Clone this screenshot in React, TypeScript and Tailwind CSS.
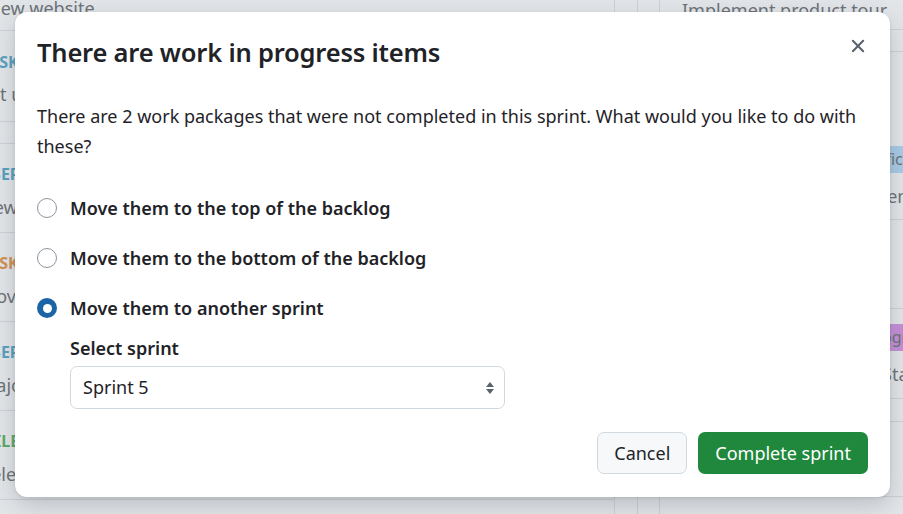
import React, { useState } from "react";

const LEFT_CARDS = [
  { type: "USER STORY", color: "text-[#5a9fbf]", subject: "New website login" },
  { type: "TASK", color: "text-[#d08f55]", subject: "Move assets" },
  { type: "USER STORY", color: "text-[#5a9fbf]", subject: "Major release prep" },
  { type: "MILESTONE", color: "text-[#5fa86a]", subject: "Release new version" },
];

const OPTIONS = [
  { id: "top", label: "Move them to the top of the backlog" },
  { id: "bottom", label: "Move them to the bottom of the backlog" },
  { id: "sprint", label: "Move them to another sprint" },
];

function Background() {
  return (
    <div className="flex h-[514px] overflow-hidden bg-[#e3e6e9] text-[18px] text-[#6c7278] whitespace-nowrap">
      {/* left column */}
      <div className="w-[655px] shrink-0 border-r border-[#cdd2d7] -ml-[40px]">
        <div className="h-[35px] border-b border-[#cdd2d7] pl-[27px] leading-[24px] -mt-[4px]">
          New website
        </div>
        <div className="h-[91px] border-b border-[#cdd2d7] pl-[20px] pt-[19px]">
          <div className="text-[16px] font-bold text-[#5a9fbf] leading-[24px]">TASK</div>
          <div className="leading-[24px] mt-[8px]">Set up hosting</div>
        </div>
        <div className="h-[22px] border-b border-[#cdd2d7]" />
        {LEFT_CARDS.map((c, i) => (
          <div key={i} className="h-[89px] border-b border-[#cdd2d7] pl-[20px] pt-[18px]">
            <div className={`text-[16px] font-bold leading-[24px] ${c.color}`}>{c.type}</div>
            <div className="leading-[24px] mt-[9px]">{c.subject}</div>
          </div>
        ))}
      </div>
      <div className="w-[23px] shrink-0 border-r border-[#cdd2d7]" />
      <div className="w-[22px] shrink-0 border-r border-[#cdd2d7]" />
      {/* right column */}
      <div className="flex-1 min-w-0">
        <div className="h-[38px] border-b border-[#cdd2d7] pl-[22px] -mt-[8px] flex items-center">
          Implement product tour
        </div>
        <div className="h-[22px] border-b border-[#cdd2d7]" />
        <div className="h-[168px] border-b border-[#cdd2d7] pt-[93px]">
          <div className="pl-[180px]">
            <span className="bg-[#a9cbe6] text-[16px] px-[6px] leading-[27px] inline-block">Specification</span>
          </div>
          <div className="leading-[24px] mt-[11px] pl-[206px]">Theme</div>
        </div>
        <div className="h-[89px] border-b border-[#cdd2d7]" />
        <div className="h-[90px] border-b border-[#cdd2d7] pt-[14px]">
          <div className="pl-[200px]">
            <span className="bg-[#c58fd8] text-[16px] px-[6px] leading-[27px] inline-block">Progress</span>
          </div>
          <div className="leading-[24px] mt-[11px] pl-[222px]">Status</div>
        </div>
        <div className="h-[23px] border-b border-[#cdd2d7]" />
        <div className="h-[75px] border-b border-[#cdd2d7]" />
      </div>
    </div>
  );
}

function Radio({ checked }: { checked: boolean }) {
  return checked ? (
    <span className="w-[20px] h-[20px] rounded-full bg-[#1b65a6] flex items-center justify-center shrink-0">
      <span className="w-[9px] h-[9px] rounded-full bg-white" />
    </span>
  ) : (
    <span className="w-[20px] h-[20px] rounded-full border border-[#8c959f] bg-white shrink-0" />
  );
}

export default function App() {
  const [choice, setChoice] = useState("sprint");

  return (
    <div
      className="relative w-[903px] h-[514px] overflow-hidden"
      style={{ fontFamily: '"Noto Sans", "Open Sans", sans-serif' }}
    >
      <Background />

      {/* Dialog */}
      <div className="absolute left-[15px] top-[12px] w-[875px] h-[485px] bg-white rounded-[12px] shadow-[0_8px_24px_rgba(66,74,83,0.25),0_1px_3px_rgba(31,35,40,0.12)] px-[22px] pt-[24px] pb-[23px] text-[#1f2328] flex flex-col">
        <div className="flex items-start justify-between">
          <h2 className="text-[25.5px] font-semibold leading-[33px] tracking-[-0.2px]">
            There are work in progress items
          </h2>
          <button className="-mt-[6px] mr-[-6px] w-[32px] h-[32px] flex items-center justify-center text-[#59636e]">
            <svg width="22" height="22" viewBox="0 0 16 16" fill="currentColor">
              <path d="M3.72 3.72a.75.75 0 0 1 1.06 0L8 6.94l3.22-3.22a.749.749 0 0 1 1.275.326.749.749 0 0 1-.215.734L9.06 8l3.22 3.22a.749.749 0 0 1-.326 1.275.749.749 0 0 1-.734-.215L8 9.06l-3.22 3.22a.751.751 0 0 1-1.042-.018.751.751 0 0 1-.018-1.042L6.94 8 3.72 4.78a.75.75 0 0 1 0-1.06Z" />
            </svg>
          </button>
        </div>

        <p className="mt-[32px] text-[18px] leading-[30px]">
          There are 2 work packages that were not completed in this sprint. What would you like to do with these?
        </p>

        <div className="mt-[32px] flex flex-col gap-[20px]">
          {OPTIONS.map((o) => (
            <label
              key={o.id}
              onClick={() => setChoice(o.id)}
              className="h-[30px] flex items-center gap-[13px] cursor-pointer"
            >
              <Radio checked={choice === o.id} />
              <span className="text-[18px] font-semibold">{o.label}</span>
            </label>
          ))}
        </div>

        <div className="pl-[33px] mt-[13px]">
          <div className="text-[18px] font-semibold leading-[24px]">Select sprint</div>
          <div className="mt-[6px] w-[435px] h-[43px] border border-[#d1d9e0] rounded-[7px] flex items-center justify-between pl-[12px] pr-[9px] text-[18px]">
            <span>Sprint 5</span>
            <svg width="10" height="16" viewBox="0 0 10 16" fill="#59636e">
              <path d="M5 2 L9 7 H1 Z" />
              <path d="M5 14 L9 9 H1 Z" />
            </svg>
          </div>
        </div>

        <div className="mt-auto flex justify-end gap-[11px]">
          <button className="h-[42px] px-[16px] rounded-[7px] border border-[#d1d9e0] bg-[#f6f8fa] text-[18px] text-[#1f2328]">
            Cancel
          </button>
          <button className="h-[42px] px-[17px] rounded-[7px] bg-[#1f883d] text-[18px] text-white">
            Complete sprint
          </button>
        </div>
      </div>
    </div>
  );
}
